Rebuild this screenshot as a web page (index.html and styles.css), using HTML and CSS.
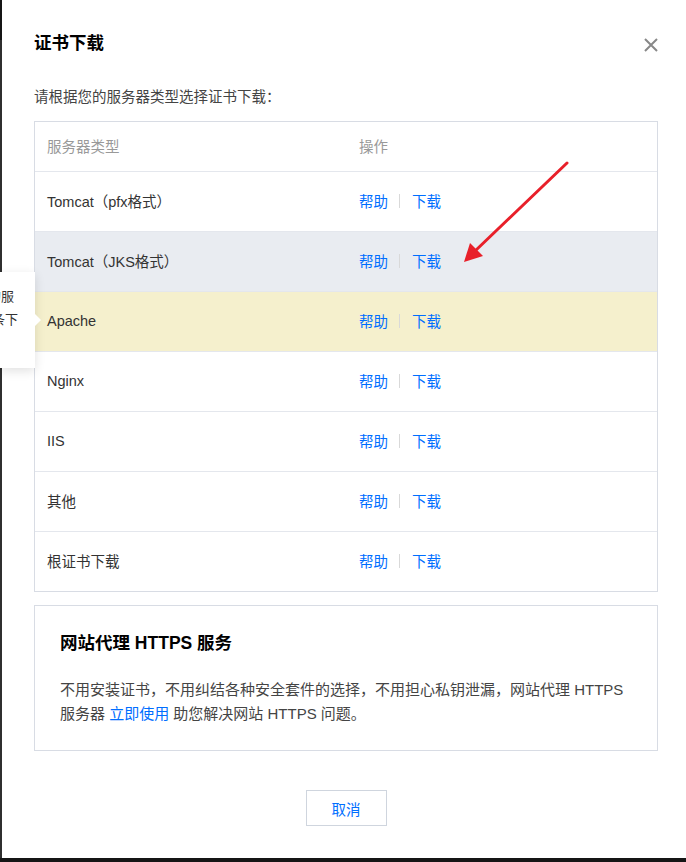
FILE: index.html
```html
<!DOCTYPE html>
<html lang="zh-CN">
<head>
    <meta charset="UTF-8">
    <meta name="viewport" content="width=device-width, initial-scale=1.0">
    <title>证书下载</title>
    <link rel="stylesheet" href="styles.css">
</head>
<body>

<div class="dialog">
    <div class="dialog-header">
        <h3>证书下载</h3>
        <span class="close">
            <svg width="16" height="16" viewBox="0 0 16 16">
                <path d="M2 2 L14 14 M14 2 L2 14" stroke="#888" stroke-width="2" fill="none"/>
            </svg>
        </span>
    </div>

    <p class="intro">请根据您的服务器类型选择证书下载：</p>

    <div class="cert-table">
        <div class="row head">
            <div class="cell type">服务器类型</div>
            <div class="cell">操作</div>
        </div>
        <div class="row">
            <div class="cell type">Tomcat（pfx格式）</div>
            <div class="cell"><a href="#">帮助</a><span class="sep"></span><a href="#">下载</a></div>
        </div>
        <div class="row hover">
            <div class="cell type">Tomcat（JKS格式）</div>
            <div class="cell"><a href="#">帮助</a><span class="sep"></span><a href="#">下载</a></div>
        </div>
        <div class="row marked">
            <div class="cell type">Apache</div>
            <div class="cell"><a href="#">帮助</a><span class="sep"></span><a href="#">下载</a></div>
        </div>
        <div class="row">
            <div class="cell type">Nginx</div>
            <div class="cell"><a href="#">帮助</a><span class="sep"></span><a href="#">下载</a></div>
        </div>
        <div class="row">
            <div class="cell type">IIS</div>
            <div class="cell"><a href="#">帮助</a><span class="sep"></span><a href="#">下载</a></div>
        </div>
        <div class="row">
            <div class="cell type">其他</div>
            <div class="cell"><a href="#">帮助</a><span class="sep"></span><a href="#">下载</a></div>
        </div>
        <div class="row">
            <div class="cell type">根证书下载</div>
            <div class="cell"><a href="#">帮助</a><span class="sep"></span><a href="#">下载</a></div>
        </div>
    </div>

    <div class="promo">
        <h4>网站代理 HTTPS 服务</h4>
        <p>不用安装证书，不用纠结各种安全套件的选择，不用担心私钥泄漏，网站代理 HTTPS 服务器 <a href="#">立即使用</a> 助您解决网站 HTTPS 问题。</p>
    </div>

    <div class="dialog-footer">
        <button class="btn-cancel">取消</button>
    </div>
</div>

<!-- tooltip left over from the page behind -->
<div class="tip">
    <span class="tip-line one">您的服务器的服</span>
    <span class="tip-line two">选择证书条下</span>
</div>

<!-- red annotation arrow -->
<svg class="mark" width="686" height="862" viewBox="0 0 686 862">
    <line x1="567" y1="163" x2="474" y2="252" stroke="#e8202a" stroke-width="3" stroke-linecap="round"/>
    <polygon points="464,262 470,243 483,256" fill="#e8202a"/>
</svg>

</body>
</html>
```

FILE: styles.css
```css
body {
    margin: 0;
    background: linear-gradient(#151515 0, #151515 40px, #2f2f2f 40px);
    font-family: "Liberation Sans", "Noto Sans CJK SC", sans-serif;
    color: #333;
    position: relative;
}
.dialog {
    margin-left: 2px;
    height: 858px;
    background-color: #fff;
    padding: 28px 28px 0 32px;
    box-sizing: border-box;
}
.dialog-header {
    display: flex;
    justify-content: space-between;
    align-items: center;
    height: 26px;
}
.dialog-header h3 {
    margin: 0;
    font-size: 17.5px;
    font-weight: bold;
    color: #000;
}
.close {
    display: flex;
    margin-right: -1px;
    margin-top: 8px;
}
.intro {
    margin: 33px 0 14px;
    font-size: 14.5px;
    line-height: 20px;
    color: #444;
}
.cert-table {
    border: 1px solid #d8dce4;
}
.row {
    display: flex;
    align-items: center;
    height: 60px;
    border-bottom: 1px solid #e4e7ed;
    box-sizing: border-box;
    font-size: 14.5px;
}
.row:last-child {
    border-bottom: none;
    height: 59px;
}
.row.head {
    height: 50px;
    color: #999;
}
.row.hover {
    background-color: #e9ecf1;
}
.row.marked {
    background-color: #f5f0cd;
}
.cell {
    padding: 0 12px 2px;
    display: flex;
    align-items: center;
}
.cell.type {
    width: 312px;
    box-sizing: border-box;
}
.cell a {
    color: #006eff;
    text-decoration: none;
}
.sep {
    display: inline-block;
    width: 1px;
    height: 14px;
    background-color: #d9d9d9;
    margin: 0 12px 0 11px;
}
.promo {
    margin-top: 13px;
    border: 1px solid #d8dce4;
    padding: 25px 25px 24px;
}
.promo h4 {
    margin: 0 0 23px;
    font-size: 17.5px;
    line-height: 24px;
    color: #000;
}
.promo p {
    margin: 0;
    font-size: 15px;
    line-height: 24px;
    color: #444;
}
.promo a {
    color: #006eff;
    text-decoration: none;
}
.dialog-footer {
    margin-top: 39px;
    display: flex;
    justify-content: center;
}
.btn-cancel {
    width: 81px;
    height: 36px;
    background-color: #fff;
    border: 1px solid #cfd5de;
    color: #006eff;
    font-family: inherit;
    font-size: 14.5px;
    padding: 0;
}
.tip {
    position: absolute;
    left: 0;
    top: 272px;
    width: 35px;
    height: 96px;
    background-color: #fff;
    box-shadow: 0 3px 10px rgba(0, 0, 0, 0.12);
    padding-top: 13px;
    box-sizing: border-box;
    font-size: 13px;
    line-height: 23px;
    color: #333;
}
.tip::after {
    content: "";
    position: absolute;
    right: -6px;
    top: 42px;
    border-left: 6px solid #fff;
    border-top: 6px solid transparent;
    border-bottom: 6px solid transparent;
}
.tip-line {
    display: block;
    overflow: hidden;
    white-space: nowrap;
    direction: rtl;
    text-align: left;
}
.tip-line.one {
    width: 14px;
}
.tip-line.two {
    width: 18px;
}
.mark {
    position: absolute;
    left: 0;
    top: 0;
    pointer-events: none;
}
```
